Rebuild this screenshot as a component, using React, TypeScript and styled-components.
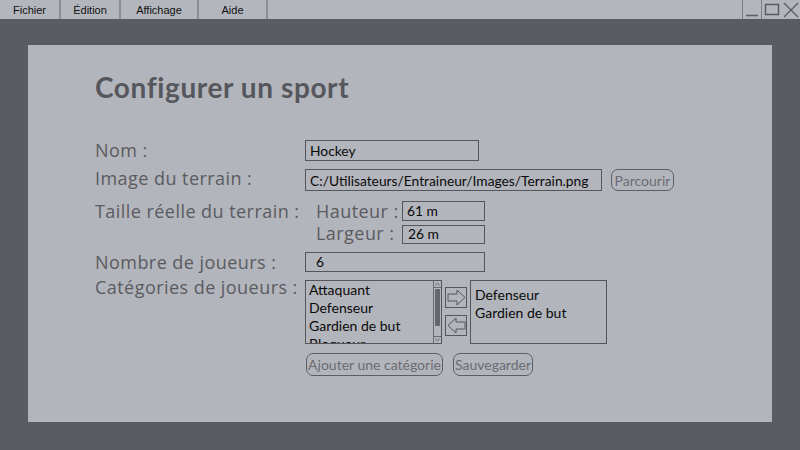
import React from "react";
import styled, { createGlobalStyle } from "styled-components";

const Global = createGlobalStyle`
  html, body { margin: 0; padding: 0; }
  body { width: 800px; height: 450px; overflow: hidden; background: #5b5c61; }
  * { box-sizing: border-box; }
`;

const Screen = styled.div`
  width: 800px;
  height: 450px;
  background: #5b5c61;
  display: flex;
  flex-direction: column;
`;

const MenuBar = styled.div`
  height: 19px;
  background: #b4b6bd;
  display: flex;
  align-items: stretch;
  font-family: "Liberation Sans", Arial, sans-serif;
  font-size: 11px;
  color: #111;
`;

const MenuItem = styled.div<{ $w: number }>`
  width: ${(p) => p.$w}px;
  display: flex;
  align-items: center;
  justify-content: center;
  border-right: 2px solid #8d8e93;
`;

const Spacer = styled.div`
  flex: 1;
`;

const WinButton = styled.div<{ $w: number; $line?: boolean }>`
  width: ${(p) => p.$w}px;
  display: flex;
  align-items: center;
  justify-content: center;
  border-left: ${(p) => (p.$line ? "1px solid #7d7e83" : "none")};
`;

const Panel = styled.div`
  margin: 26px 28px 0 28px;
  height: 377px;
  background: #b3b5bc;
  padding: 26px 0 0 67px;
  display: flex;
  flex-direction: column;
`;

const Title = styled.h1`
  margin: 0;
  font-family: Lato, "Open Sans", sans-serif;
  font-weight: 700;
  font-size: 28px;
  letter-spacing: 0.6px;
  line-height: 32px;
  color: #56575c;
`;

const Form = styled.div`
  margin-top: 37px;
  display: flex;
  flex-direction: column;
`;

const Row = styled.div<{ $h: number; $gap: number; $align?: string }>`
  display: flex;
  height: ${(p) => p.$h}px;
  margin-bottom: ${(p) => p.$gap}px;
  align-items: ${(p) => p.$align || "center"};
`;

const Label = styled.div<{ $dy?: number }>`
  width: 210px;
  margin-top: ${(p) => p.$dy ?? 0}px;
  font-family: "Open Sans", sans-serif;
  font-size: 18px;
  font-weight: 500;
  letter-spacing: 0.45px;
  line-height: 20px;
  color: #5a5b60;
  white-space: nowrap;
`;

const Input = styled.div<{ $w: number; $h: number; $pad?: number }>`
  width: ${(p) => p.$w}px;
  height: ${(p) => p.$h}px;
  border: 1px solid #55565b;
  padding-left: ${(p) => p.$pad ?? 4}px;
  display: flex;
  align-items: flex-end;
  font-family: Lato, "Open Sans", sans-serif;
  font-size: 13.8px;
  line-height: 18px;
  color: #0a0a0a;
  white-space: nowrap;
  overflow: hidden;
`;

const PillButton = styled.div<{ $w: number; $h: number }>`
  width: ${(p) => p.$w}px;
  height: ${(p) => p.$h}px;
  border: 1px solid #5d5e63;
  border-radius: 7px;
  display: flex;
  align-items: center;
  justify-content: center;
  font-family: Lato, "Open Sans", sans-serif;
  font-size: 14px;
  color: #6b6c71;
  white-space: nowrap;
`;

const FieldRow = styled.div`
  display: flex;
  align-items: center;
  gap: 9px;
`;

const SizeGrid = styled.div`
  display: grid;
  grid-template-columns: 86px 84px;
  grid-template-rows: 20px 19px;
  row-gap: 4px;
  padding-left: 11px;
  align-items: center;
`;

const SubLabel = styled.div<{ $dy?: number }>`
  margin-top: ${(p) => p.$dy ?? 0}px;
  font-family: "Open Sans", sans-serif;
  font-size: 18px;
  font-weight: 500;
  letter-spacing: 0.45px;
  line-height: 18px;
  color: #5a5b60;
  white-space: nowrap;
`;

const ListArea = styled.div`
  display: flex;
  align-items: flex-start;
  gap: 3px;
`;

const ListBox = styled.div<{ $w: number }>`
  width: ${(p) => p.$w}px;
  height: 64px;
  border: 1px solid #55565b;
  display: flex;
  overflow: hidden;
`;

const ListItems = styled.div<{ $pad: number; $top: number }>`
  flex: 1;
  padding: ${(p) => p.$top}px 0 0 ${(p) => p.$pad}px;
  font-family: Lato, "Open Sans", sans-serif;
  font-size: 14px;
  line-height: 18px;
  color: #0a0a0a;
  white-space: nowrap;
  overflow: hidden;
`;

const ScrollBar = styled.div`
  width: 8px;
  border-left: 1px solid #6a6b70;
  display: flex;
  flex-direction: column;
  align-items: center;
`;

const ScrollArrow = styled.div`
  width: 7px;
  height: 7px;
  border-bottom: 1px solid #6a6b70;
  display: flex;
  align-items: center;
  justify-content: center;
  &:last-child {
    border-bottom: none;
    border-top: 1px solid #6a6b70;
  }
`;

const ScrollTrack = styled.div`
  flex: 1;
  width: 100%;
  padding: 1px 1px 10px 1px;
  display: flex;
`;

const Thumb = styled.div`
  flex: 1;
  background: #66676c;
  border-radius: 1px;
`;

const ArrowCol = styled.div`
  display: flex;
  flex-direction: column;
  gap: 7px;
  padding-top: 7px;
`;

const ArrowButton = styled.div`
  width: 22px;
  height: 21px;
  border: 1px solid #55565b;
  display: flex;
  align-items: center;
  justify-content: center;
`;

const Arrow = ({ dir }: { dir: "right" | "left" }) => (
  <svg width="19" height="17" viewBox="0 0 19 17">
    {dir === "right" ? (
      <polygon points="1,5 10,5 10,1 18,8.5 10,16 10,12 1,12" fill="none" stroke="#55565b" strokeWidth="1" />
    ) : (
      <polygon points="18,5 9,5 9,1 1,8.5 9,16 9,12 18,12" fill="none" stroke="#55565b" strokeWidth="1" />
    )}
  </svg>
);

const ButtonRow = styled.div`
  display: flex;
  gap: 10px;
  padding-left: 1px;
`;

export default function App() {
  return (
    <>
      <Global />
      <Screen>
        <MenuBar>
          <MenuItem $w={61}>Fichier</MenuItem>
          <MenuItem $w={60}>Édition</MenuItem>
          <MenuItem $w={78}>Affichage</MenuItem>
          <MenuItem $w={69}>Aide</MenuItem>
          <Spacer />
          <WinButton $w={19} $line>
            <svg width="14" height="14" viewBox="0 0 14 14">
              <line x1="1" y1="12.5" x2="13" y2="12.5" stroke="#5a5b60" strokeWidth="1.5" />
            </svg>
          </WinButton>
          <WinButton $w={20} $line>
            <svg width="16" height="14" viewBox="0 0 16 14">
              <rect x="1.5" y="1.5" width="13" height="10" fill="none" stroke="#5a5b60" strokeWidth="1.5" />
            </svg>
          </WinButton>
          <WinButton $w={19}>
            <svg width="16" height="16" viewBox="0 0 16 16">
              <path d="M1 1 L15 15 M15 1 L1 15" stroke="#5a5b60" strokeWidth="1.3" />
            </svg>
          </WinButton>
        </MenuBar>
        <Panel>
          <Title>Configurer un sport</Title>
          <Form>
            <Row $h={21} $gap={8}>
              <Label $dy={-1}>Nom :</Label>
              <Input $w={174} $h={21}>Hockey</Input>
            </Row>
            <Row $h={22} $gap={10}>
              <Label $dy={-4}>Image du terrain :</Label>
              <FieldRow>
                <Input $w={297} $h={22}>C:/Utilisateurs/Entraineur/Images/Terrain.png</Input>
                <PillButton $w={63} $h={22}>Parcourir</PillButton>
              </FieldRow>
            </Row>
            <Row $h={43} $gap={8} $align="flex-start">
              <Label>Taille réelle du terrain :</Label>
              <SizeGrid>
                <SubLabel>Hauteur :</SubLabel>
                <Input $w={83} $h={20}>61 m</Input>
                <SubLabel $dy={-3}>Largeur :</SubLabel>
                <Input $w={83} $h={19} $pad={5}>26 m</Input>
              </SizeGrid>
            </Row>
            <Row $h={20} $gap={8}>
              <Label $dy={-1}>Nombre de joueurs :</Label>
              <Input $w={180} $h={20} $pad={10}>6</Input>
            </Row>
            <Row $h={64} $gap={8} $align="flex-start">
              <Label $dy={-3}>Catégories de joueurs :</Label>
              <ListArea>
                <ListBox $w={137}>
                  <ListItems $pad={3} $top={0}>
                    <div>Attaquant</div>
                    <div>Defenseur</div>
                    <div>Gardien de but</div>
                    <div>Bloqueur</div>
                  </ListItems>
                  <ScrollBar>
                    <ScrollArrow>
                      <svg width="5" height="4" viewBox="0 0 5 4">
                        <path d="M0.5 3.5 L2.5 1 L4.5 3.5" fill="none" stroke="#55565b" strokeWidth="0.8" />
                      </svg>
                    </ScrollArrow>
                    <ScrollTrack>
                      <Thumb />
                    </ScrollTrack>
                    <ScrollArrow>
                      <svg width="5" height="4" viewBox="0 0 5 4">
                        <path d="M0.5 0.5 L2.5 3 L4.5 0.5" fill="none" stroke="#55565b" strokeWidth="0.8" />
                      </svg>
                    </ScrollArrow>
                  </ScrollBar>
                </ListBox>
                <ArrowCol>
                  <ArrowButton>
                    <Arrow dir="right" />
                  </ArrowButton>
                  <ArrowButton>
                    <Arrow dir="left" />
                  </ArrowButton>
                </ArrowCol>
                <ListBox $w={137}>
                  <ListItems $pad={4} $top={5}>
                    <div>Defenseur</div>
                    <div>Gardien de but</div>
                  </ListItems>
                </ListBox>
              </ListArea>
            </Row>
            <Row $h={24} $gap={0}>
              <Label />
              <ButtonRow>
                <PillButton $w={137} $h={23}>Ajouter une catégorie</PillButton>
                <PillButton $w={80} $h={23}>Sauvegarder</PillButton>
              </ButtonRow>
            </Row>
          </Form>
        </Panel>
      </Screen>
    </>
  );
}
